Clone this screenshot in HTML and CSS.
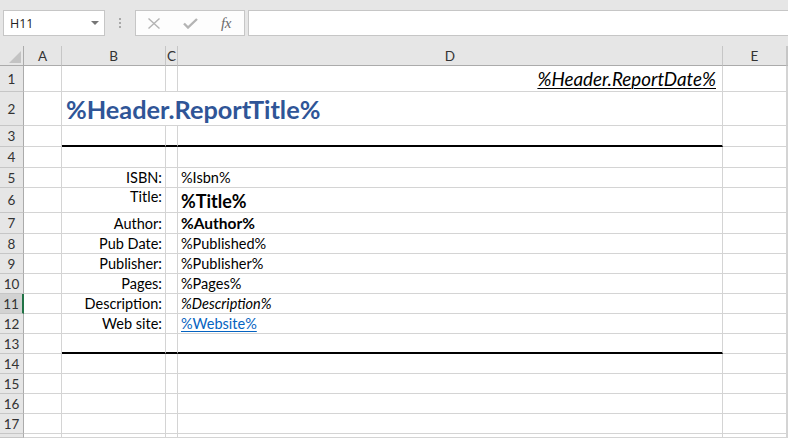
FILE: index.html
```html
<!DOCTYPE html>
<html>
<head>
<meta charset="utf-8">
<link rel="stylesheet" href="styles.css">
</head>
<body>
<div class="toolbar">
  <div class="namebox"><span>H11</span><span class="arrow"></span></div>
  <div class="dots"><i></i><i></i><i></i></div>
  <div class="fbtns">
    <span class="fslot"><svg width="12" height="11" viewBox="0 0 12 11"><path d="M0.5 0.5 L11.5 10.5 M11.5 0.5 L0.5 10.5" stroke="#b4b4b4" stroke-width="1.4" fill="none"/></svg></span>
    <span class="fslot"><svg width="15" height="11" viewBox="0 0 15 11"><path d="M1 5.5 L5 9.5 L14 1" stroke="#b4b4b4" stroke-width="2.4" fill="none"/></svg></span>
    <span class="fslot fx">fx</span>
  </div>
  <div class="finput"></div>
</div>
<div class="sheet">
  <div class="corner"><span class="tri"></span></div>
  <div class="ch">A</div><div class="ch">B</div><div class="ch">C</div><div class="ch">D</div><div class="ch">E</div><div class="ch"></div>

  <div class="rh">1</div><div class="c"></div><div class="c"></div><div class="c"></div><div class="c right date-cell"><span class="date">%Header.ReportDate%</span></div><div class="c"></div><div class="c"></div>

  <div class="rh">2</div><div class="c"></div><div class="c span3 title-cell"><span class="rtitle">%Header.ReportTitle%</span></div><div class="c"></div><div class="c"></div>

  <div class="rh">3</div><div class="c"></div><div class="c thick"></div><div class="c thick"></div><div class="c thick"></div><div class="c"></div><div class="c"></div>

  <div class="rh">4</div><div class="c"></div><div class="c"></div><div class="c"></div><div class="c"></div><div class="c"></div><div class="c"></div>

  <div class="rh">5</div><div class="c"></div><div class="c lbl">ISBN:</div><div class="c"></div><div class="c val">%Isbn%</div><div class="c"></div><div class="c"></div>

  <div class="rh">6</div><div class="c"></div><div class="c lbl top">Title:</div><div class="c"></div><div class="c val big">%Title%</div><div class="c"></div><div class="c"></div>

  <div class="rh">7</div><div class="c"></div><div class="c lbl">Author:</div><div class="c"></div><div class="c val bold">%Author%</div><div class="c"></div><div class="c"></div>

  <div class="rh">8</div><div class="c"></div><div class="c lbl">Pub Date:</div><div class="c"></div><div class="c val">%Published%</div><div class="c"></div><div class="c"></div>

  <div class="rh">9</div><div class="c"></div><div class="c lbl">Publisher:</div><div class="c"></div><div class="c val">%Publisher%</div><div class="c"></div><div class="c"></div>

  <div class="rh">10</div><div class="c"></div><div class="c lbl">Pages:</div><div class="c"></div><div class="c val">%Pages%</div><div class="c"></div><div class="c"></div>

  <div class="rh sel">11</div><div class="c"></div><div class="c lbl">Description:</div><div class="c"></div><div class="c val ital">%Description%</div><div class="c"></div><div class="c"></div>

  <div class="rh">12</div><div class="c"></div><div class="c lbl">Web site:</div><div class="c"></div><div class="c val"><span class="link">%Website%</span></div><div class="c"></div><div class="c"></div>

  <div class="rh">13</div><div class="c"></div><div class="c thick"></div><div class="c thick"></div><div class="c thick"></div><div class="c"></div><div class="c"></div>

  <div class="rh">14</div><div class="c"></div><div class="c"></div><div class="c"></div><div class="c"></div><div class="c"></div><div class="c"></div>

  <div class="rh">15</div><div class="c"></div><div class="c"></div><div class="c"></div><div class="c"></div><div class="c"></div><div class="c"></div>

  <div class="rh">16</div><div class="c"></div><div class="c"></div><div class="c"></div><div class="c"></div><div class="c"></div><div class="c"></div>

  <div class="rh">17</div><div class="c"></div><div class="c"></div><div class="c"></div><div class="c"></div><div class="c"></div><div class="c"></div>

  <div class="rh"></div><div class="c"></div><div class="c"></div><div class="c"></div><div class="c"></div><div class="c"></div><div class="c"></div>
</div>
</body>
</html>
```
FILE: styles.css
```css
* { box-sizing: border-box; margin: 0; padding: 0; }
html, body { width: 788px; height: 438px; overflow: hidden; background: #fff; }
body { font-family: Lato, "Noto Sans", sans-serif; color: #000; }

.toolbar {
  height: 46px;
  background: #e6e6e6;
  display: flex;
  align-items: flex-start;
  padding: 10px 0 0 3px;
}
.namebox {
  width: 102px;
  height: 26px;
  border: 1px solid #c6c6c6;
  background: #fff;
  display: flex;
  align-items: center;
  justify-content: space-between;
  padding: 0 5px 0 6px;
  font-family: "Open Sans", "Noto Sans", sans-serif;
  font-size: 12.5px;
  color: #222;
}
.arrow {
  width: 0; height: 0;
  border-left: 4px solid transparent;
  border-right: 4px solid transparent;
  border-top: 4px solid #767676;
}
.dots {
  width: 30px;
  height: 26px;
  display: flex;
  flex-direction: column;
  align-items: center;
  justify-content: center;
  gap: 2px;
}
.dots i { display: block; width: 2px; height: 2px; background: #a8a8a8; }
.fbtns {
  width: 110px;
  height: 26px;
  border: 1px solid #c6c6c6;
  background: #fdfdfd;
  display: flex;
  align-items: center;
}
.fslot { width: 36px; display: flex; justify-content: center; align-items: center; }
.fx {
  font-family: "Liberation Serif", "DejaVu Serif", serif;
  font-style: italic;
  font-size: 15px;
  color: #6a6a6a;
  letter-spacing: -0.5px;
}
.finput {
  flex: 1;
  height: 26px;
  margin-left: 3px;
  border: 1px solid #c6c6c6;
  border-right: none;
  background: #fff;
}

.sheet {
  display: grid;
  grid-template-columns: 24px 38px 104px 12px 545px 64px 1fr;
  grid-template-rows: 20px 26px 34px 21px 21px 20px 25px 21px repeat(10, 20px) 1fr;
  height: 392px;
  overflow: hidden;
}
.corner {
  background: #e6e6e6;
  border-right: 1px solid #ababab;
  border-bottom: 1px solid #ababab;
  display: flex;
  align-items: flex-end;
  justify-content: flex-end;
  padding: 0 2px 2px 0;
}
.tri {
  width: 0; height: 0;
  border-left: 12px solid transparent;
  border-bottom: 12px solid #c3c3c3;
}
.ch {
  background: #e6e6e6;
  border-right: 1px solid #c6c6c6;
  border-bottom: 1px solid #ababab;
  display: flex;
  align-items: center;
  justify-content: center;
  font-size: 13.5px;
  color: #333;
  padding-top: 1px;
}
.rh {
  background: #e6e6e6;
  border-right: 1px solid #ababab;
  border-bottom: 1px solid #c6c6c6;
  display: flex;
  align-items: center;
  justify-content: center;
  font-size: 13.5px;
  color: #333;
  overflow: hidden;
}
.rh.sel {
  background: #d2d2d2;
  border-right: 2px solid #217346;
  color: #333;
}
.c {
  border-right: 1px solid #d4d4d4;
  border-bottom: 1px solid #d4d4d4;
  display: flex;
  align-items: center;
  white-space: nowrap;
  font-size: 14.5px;
  min-width: 0;
}
.thick { border-bottom: 2px solid #000; }
.span3 { grid-column: span 3; }
.right { justify-content: flex-end; padding-right: 6px; }
.date {
  font-style: italic;
  font-size: 18.8px;
  text-decoration: underline;
  text-decoration-thickness: 1px;
  text-underline-offset: 2px;
}
.title-cell { padding-left: 4px; padding-top: 1px; }
.rtitle {
  font-size: 25.3px;
  font-weight: 700;
  color: #2f5597;
}
.lbl { justify-content: flex-end; padding-right: 3px; }
.lbl.top { align-items: flex-start; padding-top: 0; }
.val { padding-left: 3px; }
.big { font-weight: 700; font-size: 18px; padding-top: 2px; }
.bold { font-weight: 700; font-size: 15.5px; }
.ital { font-style: italic; }
.link { color: #0563c1; text-decoration: underline; text-decoration-thickness: 1px; text-underline-offset: 2px; }
```
